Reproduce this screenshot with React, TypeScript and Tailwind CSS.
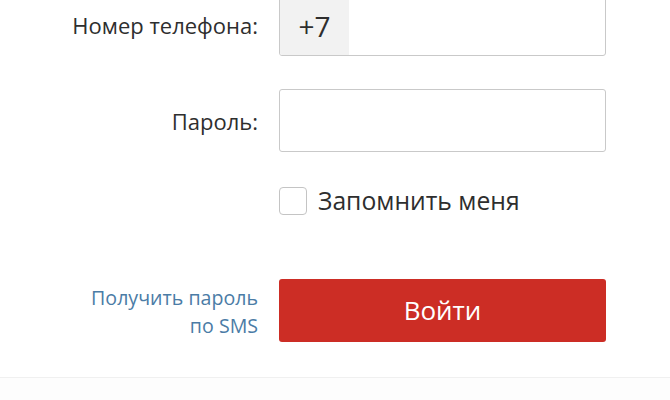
import { useState } from "react";

export default function App() {
  const [remember, setRemember] = useState(false);

  return (
    <div className="w-[670px] h-[400px] overflow-hidden bg-white font-['Open_Sans',sans-serif] text-[#2e2e2e]">
      <div className="h-[384px] -mt-[7px]">
        {/* Phone */}
        <div className="flex items-center">
          <label className="w-[258px] text-right text-[22px] leading-none">
            Номер телефона:
          </label>
          <div className="ml-[21px] w-[327px] h-[63px] flex rounded-[3px] border border-[#c9c9c9] overflow-hidden bg-white">
            <div className="w-[69px] shrink-0 bg-[#f2f2f2] flex items-center justify-center text-[28px] pt-[2px]">
              +7
            </div>
            <input className="flex-1 min-w-0 outline-none px-3 text-[22px]" />
          </div>
        </div>

        {/* Password */}
        <div className="flex items-center mt-[33px]">
          <label className="w-[258px] text-right text-[22px] leading-none">
            Пароль:
          </label>
          <input
            type="password"
            className="ml-[21px] w-[327px] h-[63px] rounded-[3px] border border-[#c9c9c9] outline-none px-3"
          />
        </div>

        {/* Remember me */}
        <div className="flex items-center mt-[35px] ml-[279px]">
          <button
            onClick={() => setRemember(!remember)}
            className="w-[28px] h-[28px] rounded-[4px] border border-[#c4c4c4] bg-white"
          />
          <span className="ml-[11px] text-[24.7px] leading-none">Запомнить меня</span>
        </div>

        {/* Submit */}
        <div className="flex items-center mt-[64px]">
          <a className="w-[258px] text-right text-[19.6px] leading-[28px] pt-[3px] text-[#4b7ca6]">
            Получить пароль
            <br />
            по SMS
          </a>
          <button className="ml-[21px] w-[327px] h-[63px] rounded-[3px] bg-[#cc2d25] text-white text-[26px]">
            Войти
          </button>
        </div>
      </div>
      <div className="h-[23px] border-t border-[#f0f0f0] bg-[#fdfdfd]" />
    </div>
  );
}
